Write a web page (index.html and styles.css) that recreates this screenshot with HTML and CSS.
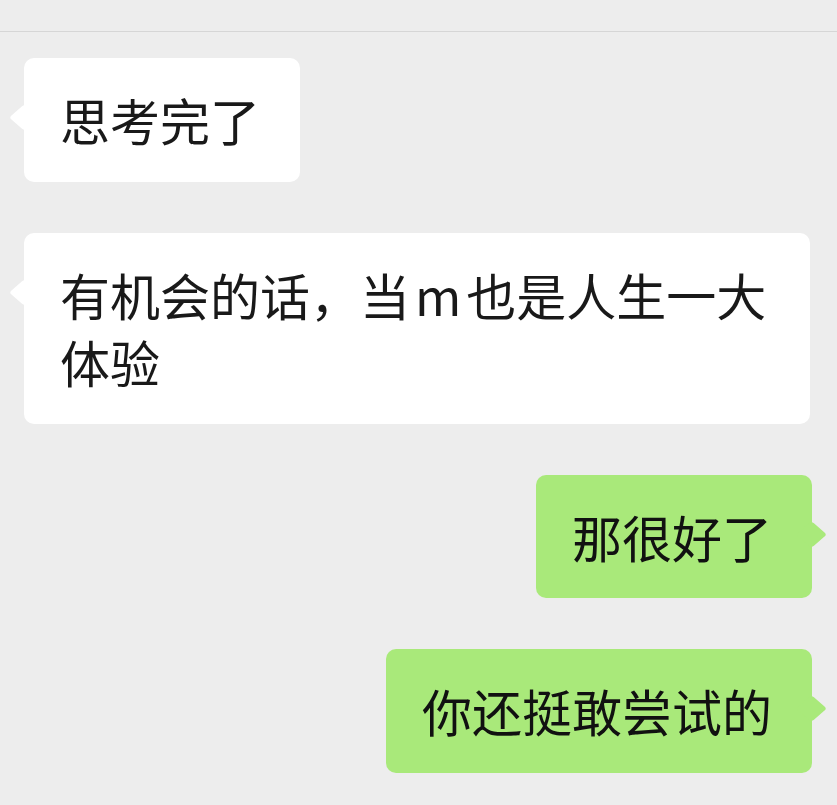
FILE: index.html
```html
<!DOCTYPE html>
<html lang="zh-CN">
<head>
    <meta charset="UTF-8">
    <meta name="viewport" content="width=device-width, initial-scale=1.0">
    <title>聊天</title>
    <link rel="stylesheet" href="styles.css">
</head>
<body>

    <!-- 顶部栏下边缘 -->
    <div class="topbar"></div>

    <!-- 聊天记录 -->
    <div class="chat">
        <div class="msg left">思考完了</div>
        <div class="msg left">有机会的话，当<span class="latin">m</span>也是人生一大体验</div>
        <div class="msg right">那很好了</div>
        <div class="msg right">你还挺敢尝试的</div>
    </div>

</body>
</html>
```

FILE: styles.css
```css
body {
    margin: 0;
    background-color: #ededed;
    font-family: "Noto Sans CJK SC", "Noto Sans", sans-serif;
    color: #191919;
}
.topbar {
    height: 31px;
    border-bottom: 1px solid #d6d6d6;
}
.chat {
    display: flex;
    flex-direction: column;
    gap: 51px;
    padding: 26px 25px 40px 24px;
}
/* 气泡 */
.msg {
    position: relative;
    max-width: 710px;
    padding: 28px 40px 28px 36px;
    font-size: 50px;
    line-height: 67.5px;
    border-radius: 10px;
}
.msg::before {
    content: "";
    position: absolute;
    top: 50px;
    width: 19px;
    height: 19px;
    border-radius: 3px;
    background-color: inherit;
}
.msg .latin {
    margin: 0 5px;
}
.msg.left {
    align-self: flex-start;
    background-color: #ffffff;
}
.msg.left::before {
    left: -9px;
    transform: scaleX(1.15) rotate(45deg);
}
.msg.right {
    align-self: flex-end;
    background-color: #a9e97a;
    color: #111;
}
.msg.right::before {
    right: -9px;
    transform: scaleX(1.15) rotate(45deg);
}
```
